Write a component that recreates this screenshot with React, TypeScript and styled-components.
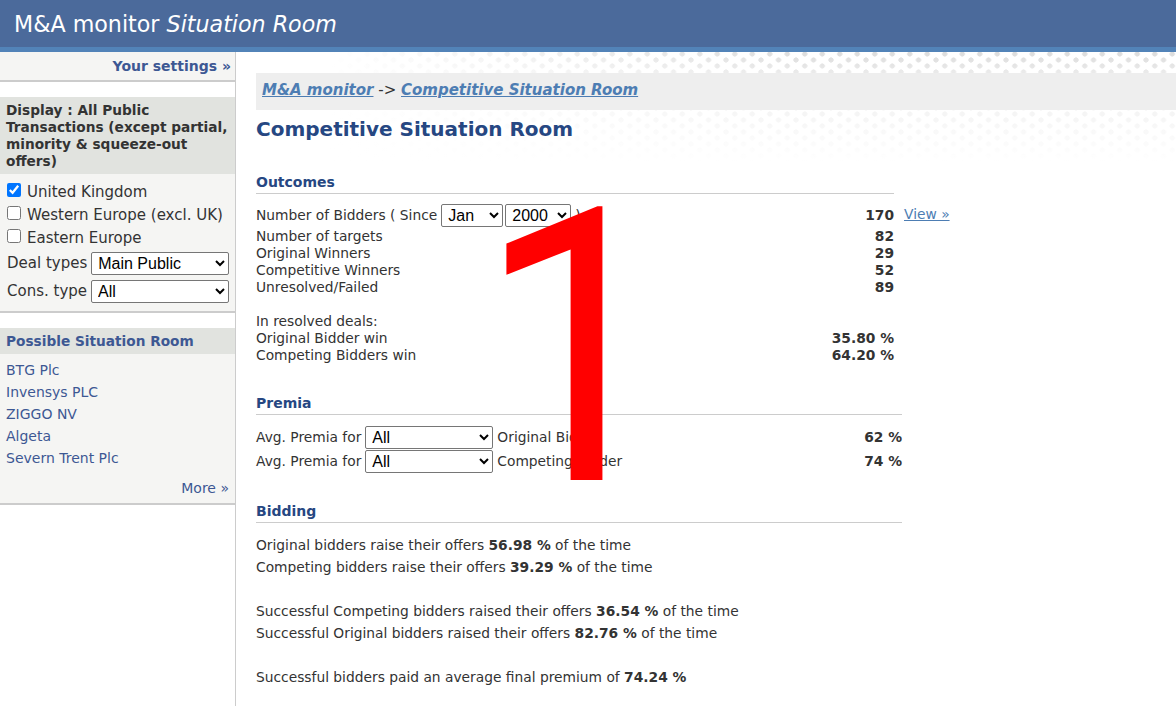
import styled, { createGlobalStyle } from "styled-components";

const GlobalStyle = createGlobalStyle`
  html, body {
    margin: 0;
    padding: 0;
    background: #fff;
  }
  body {
    font-family: "DejaVu Sans", Verdana, sans-serif;
    color: #333;
  }
`;

const Header = styled.header`
  height: 47px;
  background: #4b6a9b;
  border-bottom: 5px solid #5283b8;
  display: flex;
  align-items: center;
  padding-left: 14px;
`;

const Brand = styled.div`
  color: #fff;
  font-size: 22.2px;

  em {
    font-style: italic;
  }
`;

const Layout = styled.div`
  display: grid;
  grid-template-columns: 236px 1fr;
  min-height: calc(100vh - 52px);
`;

const Sidebar = styled.aside`
  border-right: 1px solid #ccc;
  font-size: 15px;
`;

const SettingsBar = styled.div`
  background: #f5f5f3;
  border-bottom: 2px solid #ccc;
  height: 28px;
  display: flex;
  align-items: center;
  justify-content: flex-end;
  padding-right: 4px;
  margin-bottom: 15px;
  font-size: 14px;

  a {
    color: #3d5893;
    font-weight: bold;
    text-decoration: none;
  }
`;

const Panel = styled.div`
  background: #f5f5f3;
  border-bottom: 2px solid #ccc;
  margin-bottom: 15px;
`;

const PanelHead = styled.div<{ $link?: boolean }>`
  background: #e1e3df;
  padding: 5px 2px 4px 6px;
  font-weight: bold;
  font-size: 13.7px;
  line-height: 17px;
  color: ${(p) => (p.$link ? "#3d5893" : "#333")};
`;

const PanelBody = styled.div`
  padding: 6px 6px 6px 7px;
`;

const CheckRow = styled.label`
  display: flex;
  align-items: center;
  gap: 6px;
  height: 23px;
  white-space: nowrap;

  input {
    margin: 0;
    width: 14px;
    height: 14px;
    position: relative;
    top: -2px;
  }
`;

const FieldRow = styled.div`
  display: flex;
  align-items: center;
  gap: 4px;
  height: 28px;
  white-space: nowrap;
`;

const Select = styled.select<{ $w: number }>`
  flex-shrink: 0;
  width: ${(p) => p.$w}px;
  height: 23px;
  font-family: "Liberation Sans", Arial, sans-serif;
  font-size: 16px;
  color: #000;
  background: #fff;
  border: 1px solid #767676;
  border-radius: 2px;
  padding: 0 2px;
`;

const LinkList = styled.div`
  padding: 5px 6px 4px 6px;
  font-size: 14px;

  a {
    display: block;
    line-height: 22px;
    color: #3d5893;
    text-decoration: none;
  }
`;

const More = styled.a`
  display: block;
  text-align: right;
  margin-top: 8px;
  color: #3d5893 !important;
`;

const Main = styled.main`
  padding: 21px 0 20px 20px;
  font-size: 13.8px;
  background:
    linear-gradient(to bottom, rgba(255, 255, 255, 0) 0, rgba(255, 255, 255, 0.5) 25px, #fff 110px),
    linear-gradient(to right, #fff 10%, rgba(255, 255, 255, 0) 60%),
    radial-gradient(circle, #dcdcdc 2.3px, transparent 2.9px) 0 -4px / 17.5px 12px,
    radial-gradient(circle, #dcdcdc 2.3px, transparent 2.9px) 8.75px 2px / 17.5px 12px;
  background-repeat: no-repeat, no-repeat, repeat, repeat;
  position: relative;
`;

const Crumbs = styled.div`
  background: #eee;
  height: 37px;
  display: flex;
  align-items: center;
  padding: 0 0 3px 6px;
  box-sizing: border-box;
  font-size: 15px;
  color: #333;

  a {
    color: #4d7db3;
    font-weight: bold;
    font-style: italic;
    text-decoration: underline;
  }
`;

const Title = styled.h1`
  margin: 7px 0 0 0;
  font-size: 20px;
  font-weight: bold;
  color: #264782;
  line-height: 24px;
`;

const Section = styled.section<{ $w: number; $top: number }>`
  width: ${(p) => p.$w}px;
  margin-top: ${(p) => p.$top}px;
`;

const SectionHead = styled.h2`
  margin: 0;
  font-size: 14px;
  font-weight: bold;
  color: #264782;
  line-height: 18px;
  padding-bottom: 2px;
  border-bottom: 1px solid #ccc;
`;

const StatsTable = styled.div`
  margin-top: 9px;
  position: relative;
`;

const StatRow = styled.div<{ $h?: number }>`
  display: flex;
  align-items: center;
  justify-content: space-between;
  height: ${(p) => p.$h ?? 17}px;
`;

const Label = styled.span`
  display: flex;
  align-items: center;
  gap: 4px;
  white-space: nowrap;
`;

const Value = styled.b`
  font-weight: bold;
  white-space: nowrap;
`;

const ViewLink = styled.a`
  position: absolute;
  left: 648px;
  top: 3px;
  color: #4d7db3;
  text-decoration: underline;
  white-space: nowrap;
`;

const PremiaRows = styled.div`
  margin-top: 10px;
`;

const Paragraphs = styled.div`
  margin-top: 11px;
  line-height: 22px;

  p {
    margin: 0;
  }
`;

const Spacer = styled.div`
  height: 22px;
`;

const BigOne = styled.div`
  position: absolute;
  left: 241px;
  top: 106px;
  font-family: Roboto, "Noto Sans", sans-serif;
  font-size: 383px;
  line-height: 383px;
  color: #ff0000;
  transform: scaleX(0.92);
  transform-origin: left top;
  pointer-events: none;
`;

const outcomes = [
  ["Number of targets", "82"],
  ["Original Winners", "29"],
  ["Competitive Winners", "52"],
  ["Unresolved/Failed", "89"],
];

const links = ["BTG Plc", "Invensys PLC", "ZIGGO NV", "Algeta", "Severn Trent Plc"];

export default function App() {
  return (
    <>
      <GlobalStyle />
      <Header>
        <Brand>
          M&amp;A monitor <em>Situation Room</em>
        </Brand>
      </Header>
      <Layout>
        <Sidebar>
          <SettingsBar>
            <a href="#">Your settings »</a>
          </SettingsBar>
          <Panel>
            <PanelHead>
              Display : All Public Transactions (except partial, minority &amp; squeeze-out offers)
            </PanelHead>
            <PanelBody>
              <CheckRow>
                <input type="checkbox" defaultChecked />
                United Kingdom
              </CheckRow>
              <CheckRow>
                <input type="checkbox" />
                Western Europe (excl. UK)
              </CheckRow>
              <CheckRow>
                <input type="checkbox" />
                Eastern Europe
              </CheckRow>
              <FieldRow>
                Deal types
                <Select $w={138} defaultValue="main">
                  <option value="main">Main Public</option>
                </Select>
              </FieldRow>
              <FieldRow>
                Cons. type
                <Select $w={138} defaultValue="all">
                  <option value="all">All</option>
                </Select>
              </FieldRow>
            </PanelBody>
          </Panel>
          <Panel>
            <PanelHead $link>Possible Situation Room</PanelHead>
            <LinkList>
              {links.map((l) => (
                <a href="#" key={l}>
                  {l}
                </a>
              ))}
              <More href="#">More »</More>
            </LinkList>
          </Panel>
        </Sidebar>

        <Main>
          <Crumbs>
            <a href="#">M&amp;A monitor</a>&nbsp;-&gt;&nbsp;<a href="#">Competitive Situation Room</a>
          </Crumbs>
          <Title>Competitive Situation Room</Title>

          <Section $w={638} $top={32}>
            <SectionHead>Outcomes</SectionHead>
            <StatsTable>
              <StatRow $h={24}>
                <Label>
                  Number of Bidders ( Since
                  <Select $w={62} defaultValue="jan">
                    <option value="jan">Jan</option>
                  </Select>
                  <Select $w={66} defaultValue="2000" style={{ marginLeft: -2 }}>
                    <option value="2000">2000</option>
                  </Select>
                  )
                </Label>
                <Value>170</Value>
              </StatRow>
              <ViewLink href="#">View »</ViewLink>
              {outcomes.map(([k, v]) => (
                <StatRow key={k}>
                  <span>{k}</span>
                  <Value>{v}</Value>
                </StatRow>
              ))}
              <StatRow />
              <StatRow>
                <span>In resolved deals:</span>
              </StatRow>
              <StatRow>
                <span>Original Bidder win</span>
                <Value>35.80 %</Value>
              </StatRow>
              <StatRow>
                <span>Competing Bidders win</span>
                <Value>64.20 %</Value>
              </StatRow>
            </StatsTable>
          </Section>

          <Section $w={646} $top={31}>
            <SectionHead>Premia</SectionHead>
            <PremiaRows>
              <StatRow $h={24}>
                <Label>
                  Avg. Premia for
                  <Select $w={128} defaultValue="all">
                    <option value="all">All</option>
                  </Select>
                  Original Bidder
                </Label>
                <Value>62 %</Value>
              </StatRow>
              <StatRow $h={24}>
                <Label>
                  Avg. Premia for
                  <Select $w={128} defaultValue="all">
                    <option value="all">All</option>
                  </Select>
                  Competing Bidder
                </Label>
                <Value>74 %</Value>
              </StatRow>
            </PremiaRows>
          </Section>

          <Section $w={646} $top={29}>
            <SectionHead>Bidding</SectionHead>
            <Paragraphs>
              <p>
                Original bidders raise their offers <b>56.98 %</b> of the time
              </p>
              <p>
                Competing bidders raise their offers <b>39.29 %</b> of the time
              </p>
              <Spacer />
              <p>
                Successful Competing bidders raised their offers <b>36.54 %</b> of the time
              </p>
              <p>
                Successful Original bidders raised their offers <b>82.76 %</b> of the time
              </p>
              <Spacer />
              <p>
                Successful bidders paid an average final premium of <b>74.24 %</b>
              </p>
            </Paragraphs>
          </Section>

          <BigOne>1</BigOne>
        </Main>
      </Layout>
    </>
  );
}
